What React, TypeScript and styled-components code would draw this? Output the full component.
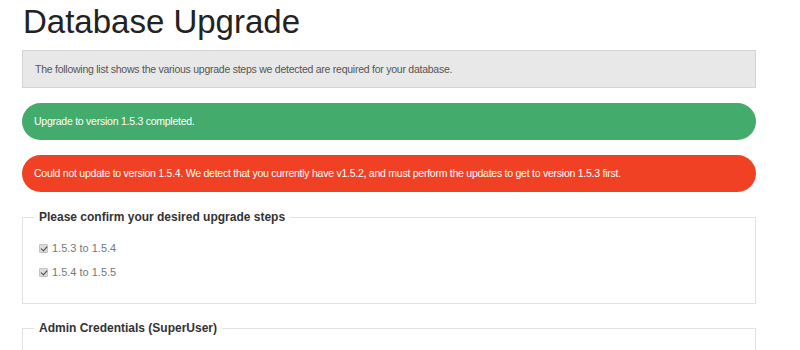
import React from 'react';
import styled, { createGlobalStyle } from 'styled-components';

const GlobalStyle = createGlobalStyle`
  body {
    margin: 0;
    background: #fff;
    font-family: 'Liberation Sans', Arial, sans-serif;
    color: #222;
  }
`;

const Page = styled.div`
  width: 734px;
  padding: 0 22px;
`;

const Title = styled.h1`
  margin: 4px 0 11px 1px;
  font-size: 33px;
  line-height: 35px;
  font-weight: normal;
  color: #222;
`;

const Panel = styled.div`
  background: #e8e8e8;
  border: 1px solid #d4d4d4;
  padding: 10px 12px;
  font-size: 10.5px;
  letter-spacing: -0.25px;
  line-height: 16px;
  color: #555;
`;

const AlertBox = styled.div<{ $tone: 'success' | 'alert' }>`
  margin-top: 15px;
  background: ${(p) => (p.$tone === 'success' ? '#43ab6b' : '#f04124')};
  border-radius: 19px;
  padding: 10px 12px;
  font-size: 10.5px;
  letter-spacing: -0.25px;
  line-height: 17px;
  color: #fff;
`;

const Fieldset = styled.fieldset<{ $first?: boolean }>`
  margin: ${(p) => (p.$first ? '17px' : '16px')} 0 0;
  border: 1px solid #e2e2e2;
  padding: 11px 11px 19px;
  min-height: ${(p) => (p.$first ? 'auto' : '80px')};
`;

const Legend = styled.legend`
  padding: 0 5px;
  font-size: 12px;
  line-height: 16px;
  font-weight: bold;
  color: #333;
`;

const CheckRow = styled.label`
  display: flex;
  align-items: center;
  height: 24px;
  padding-left: 5px;
  font-size: 11px;
  color: #777;
`;

const Check = styled.input`
  appearance: none;
  position: relative;
  width: 9px;
  height: 9px;
  margin: 0 4px 0 0;
  background: #dcdcdc;
  border: 1px solid #c4c4c4;
  border-radius: 1px;

  &:checked::after {
    content: '';
    position: absolute;
    left: 2px;
    top: 0px;
    width: 3px;
    height: 5px;
    border: solid #444;
    border-width: 0 1.5px 1.5px 0;
    transform: rotate(40deg);
  }
`;

const steps = ['1.5.3 to 1.5.4', '1.5.4 to 1.5.5'];

export default function App() {
  return (
    <>
      <GlobalStyle />
      <Page>
        <Title>Database Upgrade</Title>
        <Panel>The following list shows the various upgrade steps we detected are required for your database.</Panel>
        <AlertBox $tone='success'>Upgrade to version 1.5.3 completed.</AlertBox>
        <AlertBox $tone='alert'>
          Could not update to version 1.5.4. We detect that you currently have v1.5.2, and must perform the updates to get to version 1.5.3 first.
        </AlertBox>
        <Fieldset $first>
          <Legend>Please confirm your desired upgrade steps</Legend>
          {steps.map((s) => (
            <CheckRow key={s}>
              <Check type='checkbox' defaultChecked />
              {s}
            </CheckRow>
          ))}
        </Fieldset>
        <Fieldset>
          <Legend>Admin Credentials (SuperUser)</Legend>
        </Fieldset>
      </Page>
    </>
  );
}
